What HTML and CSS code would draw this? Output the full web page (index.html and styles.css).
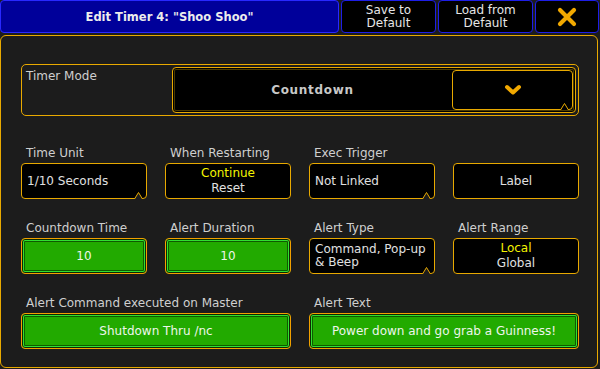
FILE: index.html
```html
<!DOCTYPE html>
<html lang="en">
<head>
    <meta charset="UTF-8">
    <title>Edit Timer</title>
    <link rel="stylesheet" href="styles.css">
</head>
<body>
    <div class="header">
        <div class="title">Edit Timer 4: "Shoo Shoo"</div>
        <button class="hbtn">Save to<br>Default</button>
        <button class="hbtn">Load from<br>Default</button>
        <button class="hbtn close">
            <svg width="20" height="20" viewBox="0 0 20 20"><path d="M3 3 L17 17 M17 3 L3 17" stroke="#f2a900" stroke-width="4.2" stroke-linecap="round"/></svg>
        </button>
    </div>

    <div class="panel">
        <div class="mode">
            <span class="mode-label">Timer Mode</span>
            <div class="mode-value">
                <span class="mode-text">Countdown</span>
                <div class="mode-drop">
                    <svg width="18" height="12" viewBox="0 0 18 12"><path d="M3 3 L9 8.5 L15 3" fill="none" stroke="#f2a900" stroke-width="4" stroke-linecap="round" stroke-linejoin="round"/></svg>
                    <svg class="notch" width="9" height="8" viewBox="0 0 9 8"><polyline points="0.5,8 4.5,1.5 8.5,8" fill="#000" stroke="#e8a900" stroke-width="1"/></svg>
                </div>
            </div>
        </div>

        <div class="grid">
            <div class="field">
                <div class="label">Time Unit</div>
                <div class="box left">1/10 Seconds
                    <svg class="notch" width="9" height="8" viewBox="0 0 9 8"><polyline points="0.5,8 4.5,1.5 8.5,8" fill="#1c1c1c" stroke="#e8a900" stroke-width="1"/></svg>
                </div>
            </div>
            <div class="field">
                <div class="label">When Restarting</div>
                <div class="box multi"><span class="sel">Continue</span><span>Reset</span></div>
            </div>
            <div class="field">
                <div class="label">Exec Trigger</div>
                <div class="box left">Not Linked
                    <svg class="notch" width="9" height="8" viewBox="0 0 9 8"><polyline points="0.5,8 4.5,1.5 8.5,8" fill="#1c1c1c" stroke="#e8a900" stroke-width="1"/></svg>
                </div>
            </div>
            <div class="field">
                <div class="label">&nbsp;</div>
                <div class="box">Label</div>
            </div>

            <div class="field">
                <div class="label">Countdown Time</div>
                <div class="box green">10</div>
            </div>
            <div class="field">
                <div class="label">Alert Duration</div>
                <div class="box green">10</div>
            </div>
            <div class="field">
                <div class="label">Alert Type</div>
                <div class="box left wrap">Command, Pop-up<br>&amp; Beep
                    <svg class="notch" width="9" height="8" viewBox="0 0 9 8"><polyline points="0.5,8 4.5,1.5 8.5,8" fill="#1c1c1c" stroke="#e8a900" stroke-width="1"/></svg>
                </div>
            </div>
            <div class="field">
                <div class="label">Alert Range</div>
                <div class="box multi"><span class="sel">Local</span><span>Global</span></div>
            </div>

            <div class="field wide">
                <div class="label">Alert Command executed on Master</div>
                <div class="box green">Shutdown Thru /nc</div>
            </div>
            <div class="field wide">
                <div class="label">Alert Text</div>
                <div class="box green">Power down and go grab a Guinness!</div>
            </div>
        </div>
    </div>
</body>
</html>
```

FILE: styles.css
```css
body {
    margin: 0;
    background: #1c1c1c;
    font-family: "DejaVu Sans", sans-serif;
    font-size: 12px;
    color: #dcdcdc;
    width: 600px;
    height: 369px;
    overflow: hidden;
}
.header {
    display: flex;
    gap: 2px;
    height: 33px;
}
.title {
    width: 339px;
    box-sizing: border-box;
    background: #00009a;
    border: 1px solid #2828ff;
    border-radius: 4px;
    display: flex;
    align-items: center;
    justify-content: center;
    font-weight: bold;
    font-size: 11.5px;
    color: #ececec;
}
.hbtn {
    width: 95px;
    box-sizing: border-box;
    background: #000;
    border: 1px solid #1e1ee6;
    border-radius: 4px;
    color: #e6e6e6;
    font-family: inherit;
    font-size: 12px;
    line-height: 13px;
    padding: 1px 0 0;
}
.hbtn.close {
    width: 64px;
    padding: 0;
    display: flex;
    align-items: center;
    justify-content: center;
}
.panel {
    margin-top: 2px;
    width: 598px;
    height: 333px;
    box-sizing: border-box;
    border: 1px solid #e8a900;
    border-radius: 6px;
    padding: 28px 0 0 20px;
}
.mode {
    width: 558px;
    height: 52px;
    box-sizing: border-box;
    border: 1px solid #e8a900;
    border-radius: 5px;
    display: flex;
    padding: 2px 2px 2px 4px;
}
.mode-label {
    width: 146px;
    color: #cfcfcf;
    padding-top: 2px;
}
.mode-value {
    flex: 1;
    display: flex;
    align-items: center;
    background: #000;
    border: 1px solid #e8a900;
    border-radius: 4px;
    box-shadow: inset 0 0 0 1px #000, inset 0 0 0 2px #4a3a00;
}
.mode-text {
    flex: 1;
    text-align: center;
    font-weight: bold;
    color: #c8c8c8;
    letter-spacing: 0.7px;
}
.mode-drop {
    position: relative;
    width: 121px;
    height: 40px;
    box-sizing: border-box;
    margin-right: 2px;
    border: 1px solid #e8a900;
    border-radius: 4px;
    display: flex;
    align-items: center;
    justify-content: center;
}
.notch {
    position: absolute;
    right: 3px;
    bottom: -1px;
}
.grid {
    margin-top: 30px;
    display: grid;
    grid-template-columns: repeat(4, 126px);
    column-gap: 18px;
    row-gap: 22px;
}
.field.wide {
    grid-column: span 2;
}
.label {
    height: 17px;
    padding-left: 5px;
    color: #cfcfcf;
    line-height: 14px;
}
.box {
    position: relative;
    height: 36px;
    box-sizing: border-box;
    background: #000;
    border: 1px solid #e8a900;
    border-radius: 4px;
    display: flex;
    align-items: center;
    justify-content: center;
    color: #e0e0e0;
}
.box.left {
    justify-content: flex-start;
    padding-left: 5px;
}
.box.wrap {
    line-height: 13px;
    padding-bottom: 1px;
}
.box.multi {
    flex-direction: column;
    line-height: 15px;
}
.sel {
    color: #f4f400;
}
.box.green {
    background: #22aa00;
    border-color: #f2a000;
    box-shadow: inset 0 0 0 1px #0c2a00, inset 0 0 0 2px #30e030, inset 0 0 0 3px #0f5a00;
    color: #eef6ea;
}
```
